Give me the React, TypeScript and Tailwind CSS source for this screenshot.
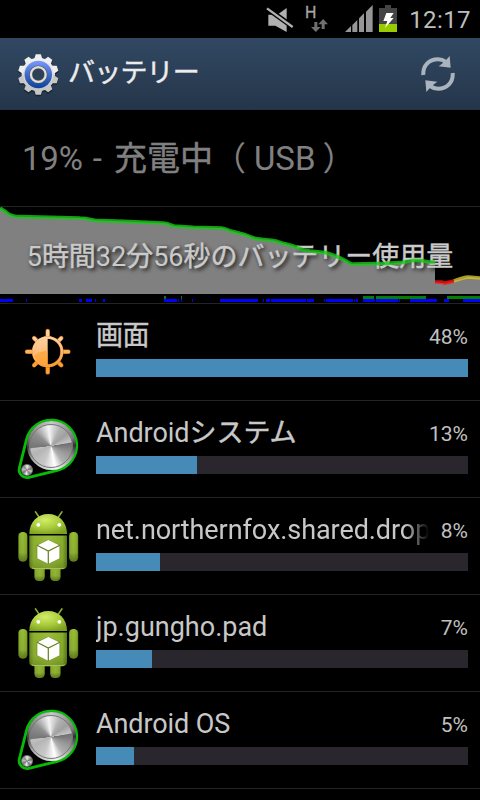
import type { ReactNode } from "react";

const LATIN = "font-['Roboto','Noto_Sans_CJK_JP',sans-serif]";

// Japanese runs are drawn slightly heavier than the Latin ones.
function Jp({ children }: { children: ReactNode }) {
  return <span className="[-webkit-text-stroke:0.45px_currentColor]">{children}</span>;
}

function MuteIcon() {
  return (
    <svg className="h-[27px] w-[28px]" viewBox="0 0 84 81">
      <path d="M7 29H34L62 9V81L28 62H7z" fill="#b0b0b0" />
      <path d="M-4 5L84 68" stroke="#000" strokeWidth="15" />
      <path d="M3 10L80 66" stroke="#b0b0b0" strokeWidth="7" />
    </svg>
  );
}

function SignalIcon() {
  return (
    <svg className="h-[27px] w-[28px]" viewBox="0 0 84 81">
      <g fill="#969696">
        <path d="M0 81L18 63V81z" />
        <path d="M22 60L37 45V81H22z" />
        <path d="M42 40L57 25V81H42z" />
        <path d="M63 20L83 0V81H63z" />
      </g>
    </svg>
  );
}

function ChargingIcon() {
  return (
    <svg className="h-[27px] w-[18px]" viewBox="0 0 54 81">
      <path d="M18 0H36V9H54V57H0V9H18z" fill="#444" />
      <path d="M0 57H54V81H0z" fill="#99cc00" />
      <path d="M22 24H44L34 39H44L18 69L25 48H13z" fill="#fff" />
    </svg>
  );
}

function StatusBar() {
  return (
    <div className="flex h-[38px] items-start bg-black pr-[9px]">
      <div className="ml-[266px] mt-[5px]"><MuteIcon /></div>
      <div className="ml-[11px] mt-[5px] flex h-[28px] w-[24px] flex-col">
        <span className="h-[14px] text-[16px] leading-[16px] text-[#a6a6a6] [-webkit-text-stroke:0.3px_currentColor]">H</span>
        <svg className="ml-[6px] h-[13px] w-[17px]" viewBox="0 0 51 39">
          <path d="M10 9H19V24H29L14.500 39L0 24H10zM32 30H41V16H51L36.500 0L22 16H32z" fill="#707070" />
        </svg>
      </div>
      <div className="ml-[16px] mt-[5px]"><SignalIcon /></div>
      <div className="ml-[6px] mt-[5px]"><ChargingIcon /></div>
      <span className="ml-auto mt-[6px] text-[24px] leading-[28px] tracking-[0.4px] text-[#bebebe]">12:17</span>
    </div>
  );
}

const TEETH = [0, 36, 72, 108, 144, 180, 216, 252, 288, 324];

function GearIcon() {
  return (
    <svg className="h-[44px] w-[44px] overflow-visible" viewBox="-22 -22 44 44">
      <defs>
        <linearGradient id="gearMetal" gradientUnits="userSpaceOnUse" x1="0" y1="-20" x2="0" y2="20">
          <stop offset="0" stopColor="#f6f6f6" />
          <stop offset="1" stopColor="#bdbdbd" />
        </linearGradient>
        <linearGradient id="gearBlue" x1="0" y1="0" x2="0" y2="1">
          <stop offset="0" stopColor="#7899fa" />
          <stop offset="0.5" stopColor="#416bcb" />
          <stop offset="1" stopColor="#08439b" />
        </linearGradient>
      </defs>
      <g transform="translate(0.300 0.500)">
        <g fill="#101923" opacity="0.65" transform="translate(0 1.200)">
          <circle r="17" />
          {TEETH.map((a) => <path key={a} d="M-4.500 -15L-2.800 -20.500H2.800L4.500 -15z" transform={`rotate(${a})`} />)}
        </g>
        <circle r="16.700" fill="url(#gearMetal)" />
        {TEETH.map((a) => (
          <path key={a} d="M-4.200 -15L-2.600 -20.200H2.600L4.200 -15z" fill={a > 90 && a < 270 ? "#c6c6c6" : "#eeeeee"} transform={`rotate(${a})`} />
        ))}
        <circle r="13.700" fill="url(#gearBlue)" />
        <circle r="7.400" fill="#2c4057" stroke="#555" strokeWidth="3.400" />
        <circle r="7.400" fill="none" stroke="#dedede" strokeWidth="2.300" />
      </g>
    </svg>
  );
}

function RefreshIcon() {
  return (
    <svg className="h-[36px] w-[34px]" viewBox="-51 -54 102 108">
      {[0, 180].map((a) => (
        <g key={a} transform={`rotate(${a})`}>
          <path d="M-44 3C-46 -25 -27 -44 0 -44C10 -44 17 -41 24 -36" fill="none" stroke="#aab4be" strokeWidth="12" />
          <path d="M35 -54L38 -19L2 -23L12 -31L25 -43z" fill="#aab4be" />
        </g>
      ))}
    </svg>
  );
}

function ActionBar() {
  return (
    <header className="flex h-[72px] items-center border-b border-[#223347] bg-gradient-to-b from-[#314863] to-[#25364a] pl-[16px] pr-[25px]">
      <GearIcon />
      <h1 className="ml-[8px] mt-[-1px] text-[27px] leading-[36px] tracking-[-0.8px] text-[#ececec]"><Jp>バッテリー</Jp></h1>
      <div className="ml-auto"><RefreshIcon /></div>
    </header>
  );
}

const BLUE: [number, number][] = [
  [0, 39], [78, 3], [237, 9], [258, 18], [285, 3], [309, 6], [492, 39], [534, 3], [543, 3], [576, 3], [660, 114],
  [789, 3], [798, 12], [813, 105], [921, 21], [972, 3], [978, 81], [1062, 3], [1068, 6], [1089, 36], [1128, 66],
  [1197, 3], [1230, 81], [1332, 15], [1389, 51],
];
const GREEN: [number, number][] = [[492, 6], [543, 3], [1089, 33], [1128, 150], [1341, 99]];
const LEVEL =
  "M0 24L15 34C25 41 28 46 38 47C45 50 52 50 60 50L240 54C252 54 258 56 265 57L285 61L390 65L490 69C500 70 507 72 512 75L522 78L580 82L665 84C675 85 682 89 690 92L720 100C738 104 750 110 765 115C785 119 800 119 815 121C830 123 840 127 850 130L880 138L910 150L930 153L975 158C990 160 1010 170 1025 176L1040 184C1048 190 1050 192 1057 192L1160 190L1210 187C1225 185 1232 181 1245 181C1270 181 1280 185 1290 186H1305";

function BatteryGraph() {
  return (
    <section className="relative h-[97px] border-b border-[#242424]">
      <svg className="absolute inset-0 h-[96px] w-[480px]" viewBox="0 21 1440 288">
        <path d={LEVEL + "V282H0z"} fill="#808080" />
        <path d="M1305 246L1335 250L1362 243L1405 231L1440 234V282H1305z" fill="#808080" />
      </svg>
      <p className="relative flex justify-center whitespace-nowrap pt-[32px] text-[27px] leading-[36px] tracking-[-0.02px] text-[#cacaca] [text-shadow:2px_2px_4px_#000]">
        5<Jp>時間</Jp>32<Jp>分</Jp>56<Jp>秒のバッテリー使用量</Jp>
      </p>
      <svg className="absolute inset-0 h-[96px] w-[480px]" viewBox="0 21 1440 288">
        <g fill="none" strokeWidth="11" opacity="0.8">
          <path d={LEVEL} stroke="#18c818" />
          <path d="M1305 246L1325 246L1335 249L1362 243" stroke="#ff1010" />
          <path d="M1362 243C1380 236 1388 232 1405 231L1440 234" stroke="#d5c62a" />
        </g>
        <g fill="#0000ff">{BLUE.map(([x, w]) => <rect key={x} x={x} y="297" width={w} height="9" />)}</g>
        <g fill="#008000">{GREEN.map(([x, w]) => <rect key={x} x={x} y="288" width={w} height="9" />)}</g>
      </svg>
    </section>
  );
}

const RAYS = [0, 45, 90, 135, 180, 225, 270, 315];

function ScreenIcon() {
  return (
    <svg className="h-[72px] w-[72px]" viewBox="0 0 72 72">
      <defs>
        <linearGradient id="sun" gradientUnits="userSpaceOnUse" x1="30" y1="13" x2="38" y2="59">
          <stop offset="0" stopColor="#ffdfbc" />
          <stop offset="0.45" stopColor="#ffc080" />
          <stop offset="1" stopColor="#f98906" />
        </linearGradient>
      </defs>
      <g stroke="#c4721e" strokeWidth="4.400" strokeLinecap="round">
        {RAYS.map((a) => <path key={a} d={a % 90 ? "M35.700 21V16.500" : "M35.700 21V15"} transform={`rotate(${a} 35.700 35.700)`} />)}
      </g>
      {RAYS.map((a) => (
        <path key={a} d={a % 90 ? "M35.700 21V16.500" : "M35.700 21V15"} stroke={a > 90 && a < 270 ? "#ffa02e" : a === 90 || a === 270 ? "#ffb45c" : "#ffd0a0"} strokeWidth="3.200" strokeLinecap="round" transform={`rotate(${a} 35.700 35.700)`} />
      ))}
      <circle cx="35.700" cy="35.700" r="14.200" fill="#000" stroke="#b0651a" strokeWidth="3.200" />
      <circle cx="35.700" cy="35.700" r="14.200" fill="none" stroke="url(#sun)" strokeWidth="2.600" />
      <path d="M35.700 22.500A13.200 13.200 0 0 0 35.700 48.900z" fill="url(#sun)" />
      <path d="M22.500 40C25 36.500 30 35.500 35.700 34.500V48.900A13.200 13.200 0 0 1 22.500 40z" fill="#ffa437" opacity="0.7" />
    </svg>
  );
}

function KnobIcon() {
  return (
    <div className="relative h-[72px] w-[72px]">
      <svg className="h-[72px] w-[72px]" viewBox="0 0 72 72">
        <path d="M14.500 26.400A25.500 25.500 0 1 1 45.400 57.300L16.900 64.300A7.800 7.800 0 0 1 7.400 54.800z" fill="#000" stroke="#06bc06" strokeWidth="2.800" />
      </svg>
      <div className="absolute left-[15px] top-[8px] h-[49px] w-[49px] rounded-full bg-[conic-gradient(#c8c8c8,#777_20%,#303030_25%,#888_32%,#f5f5f5_47%,#aaa_65%,#404040_74%,#777_80%,#c8c8c8)]" />
      <div className="absolute left-[17px] top-[10.500px] h-[44px] w-[44px] rounded-full border border-[#777] bg-[conic-gradient(from_-8deg,#f4f4f4,#b0b0b0_10%,#a0a0a0_17%,#c4c4c4_24%,#707070_25%,#989898_34%,#b0b0b0_42%,#fff_49%,#c8c8c8_58%,#b5b5b5_70%,#c0c0c0_75%,#747474_76%,#909090_88%,#f4f4f4)]" />
      <div className="absolute left-[9px] top-[50.500px] h-[12px] w-[12px] rounded-full border border-[#777] bg-[conic-gradient(#eee,#777_20%,#ccc_30%,#777_40%,#eee_52%,#777_65%,#bbb_78%,#888_88%,#eee)]" />
    </div>
  );
}

function AndroidIcon() {
  return (
    <svg className="h-[72px] w-[72px]" viewBox="0 0 72 72">
      <defs>
        <linearGradient id="droidBody" x1="0" y1="0" x2="1" y2="0">
          <stop offset="0" stopColor="#658820" />
          <stop offset="0.12" stopColor="#8db030" />
          <stop offset="0.5" stopColor="#98bd36" />
          <stop offset="0.88" stopColor="#88ac2c" />
          <stop offset="1" stopColor="#587b18" />
        </linearGradient>
        <radialGradient id="droidHead" cx="0.42" cy="0.3" r="0.75">
          <stop offset="0" stopColor="#d3ec69" />
          <stop offset="0.55" stopColor="#a8cb3b" />
          <stop offset="1" stopColor="#7ca021" />
        </radialGradient>
        <linearGradient id="droidShade" x1="0" y1="0" x2="0" y2="1">
          <stop offset="0" stopColor="#000" stopOpacity="0" />
          <stop offset="0.7" stopColor="#000" stopOpacity="0.06" />
          <stop offset="1" stopColor="#203000" stopOpacity="0.45" />
        </linearGradient>
      </defs>
      <path d="M23.400 1.800L27 7M50 1.800L46.400 7" stroke="#8db12e" strokeWidth="1.500" strokeLinecap="round" />
      <rect x="22.300" y="54" width="10.600" height="17" rx="4.500" fill="url(#droidBody)" />
      <rect x="38.100" y="54" width="10.600" height="17" rx="4.500" fill="url(#droidBody)" />
      <rect x="22.300" y="54" width="10.600" height="17" rx="4.500" fill="url(#droidShade)" />
      <rect x="38.100" y="54" width="10.600" height="17" rx="4.500" fill="url(#droidShade)" />
      <rect x="6.300" y="22" width="9.200" height="29.500" rx="4.200" fill="url(#droidBody)" />
      <rect x="57" y="22" width="9.200" height="29.500" rx="4.200" fill="url(#droidBody)" />
      <rect x="6.300" y="22" width="9.200" height="29.500" rx="4.200" fill="url(#droidShade)" />
      <rect x="57" y="22" width="9.200" height="29.500" rx="4.200" fill="url(#droidShade)" />
      <path d="M17.300 24C17.300 12 25.500 4 36.300 4S55 12 55 24z" fill="url(#droidHead)" />
      <path d="M17.300 25.500H55V54.500Q55 59.300 50 59.300H22.300Q17.300 59.300 17.300 54.500z" fill="url(#droidBody)" />
      <path d="M17.300 25.500H55V54.500Q55 59.300 50 59.300H22.300Q17.300 59.300 17.300 54.500z" fill="url(#droidShade)" opacity="0.5" />
      <path d="M20 57.800Q21 58.600 23 58.600H49.500Q51.500 58.600 52.500 57.800" stroke="#b6ce77" strokeWidth="0.800" fill="none" />
      <circle cx="26.300" cy="14.800" r="1.900" fill="#fff" />
      <circle cx="47.300" cy="14.800" r="1.900" fill="#fff" />
      <path d="M36.300 29.600L47.800 35.200V48.600L36.300 54.200L25 48.600V35.200z" fill="#fff" stroke="#67871b" strokeWidth="0.600" />
      <path d="M25 35.300L36.300 41L47.800 35.300M36.300 41V54" stroke="#64801e" strokeWidth="1.200" fill="none" />
    </svg>
  );
}

type Usage = { icon: ReactNode; name: ReactNode; percent: string; width: number; nameClass: string };

const USAGES: Usage[] = [
  { icon: <ScreenIcon />, name: <Jp>画面</Jp>, percent: "48%", width: 372, nameClass: "tracking-[-0.5px]" },
  { icon: <KnobIcon />, name: <>Android<Jp>システム</Jp></>, percent: "13%", width: 101, nameClass: "tracking-[-0.05px]" },
  { icon: <AndroidIcon />, name: "net.northernfox.shared.drop", percent: "8%", width: 64, nameClass: "tracking-[-0.07px] [mask-image:linear-gradient(to_right,#000_calc(100%-24px),transparent)]" },
  { icon: <AndroidIcon />, name: "jp.gungho.pad", percent: "7%", width: 56, nameClass: "" },
  { icon: <KnobIcon />, name: "Android OS", percent: "5%", width: 38, nameClass: "tracking-[-0.1px]" },
];

function UsageRow({ icon, name, percent, width, nameClass }: Usage) {
  return (
    <li className="flex h-[97px] items-center border-b border-[#242424] pl-[12px] pr-[12px]">
      {icon}
      <div className="ml-[12px] flex h-full min-w-0 flex-1 flex-col pt-[14px]">
        <div className="flex h-[41px] items-start">
          <span className={`min-w-0 flex-1 overflow-hidden whitespace-nowrap text-[27px] leading-[36px] text-[#c8c8c8] ${nameClass}`}>{name}</span>
          <span className="ml-[12px] mt-[6px] text-[21px] leading-[26px] text-[#c0c0c0]">{percent}</span>
        </div>
        <div className="h-[18px] bg-[#29272d]">
          <div className="h-full bg-[#468bb8]" style={{ width }} />
        </div>
      </div>
    </li>
  );
}

export default function App() {
  return (
    <div className={`h-[800px] w-[480px] overflow-hidden bg-black ${LATIN}`} lang="ja">
      <StatusBar />
      <ActionBar />
      <div className="flex h-[97px] items-center whitespace-pre border-b border-[#242424] pl-[22px] pt-[1px] text-[33px] leading-[44px] text-[#808080]">
        <span className="tracking-[-0.2px]">19% </span>
        <span className="ml-[2px]">- </span>
        <span className="ml-[4px]"><Jp>充電中</Jp></span>
        <span>（</span>
        <span className="ml-[8px]">USB</span>
        <span className="ml-[7px]">）</span>
      </div>
      <BatteryGraph />
      <ul>
        {USAGES.map((u, i) => <UsageRow key={i} {...u} />)}
      </ul>
    </div>
  );
}
